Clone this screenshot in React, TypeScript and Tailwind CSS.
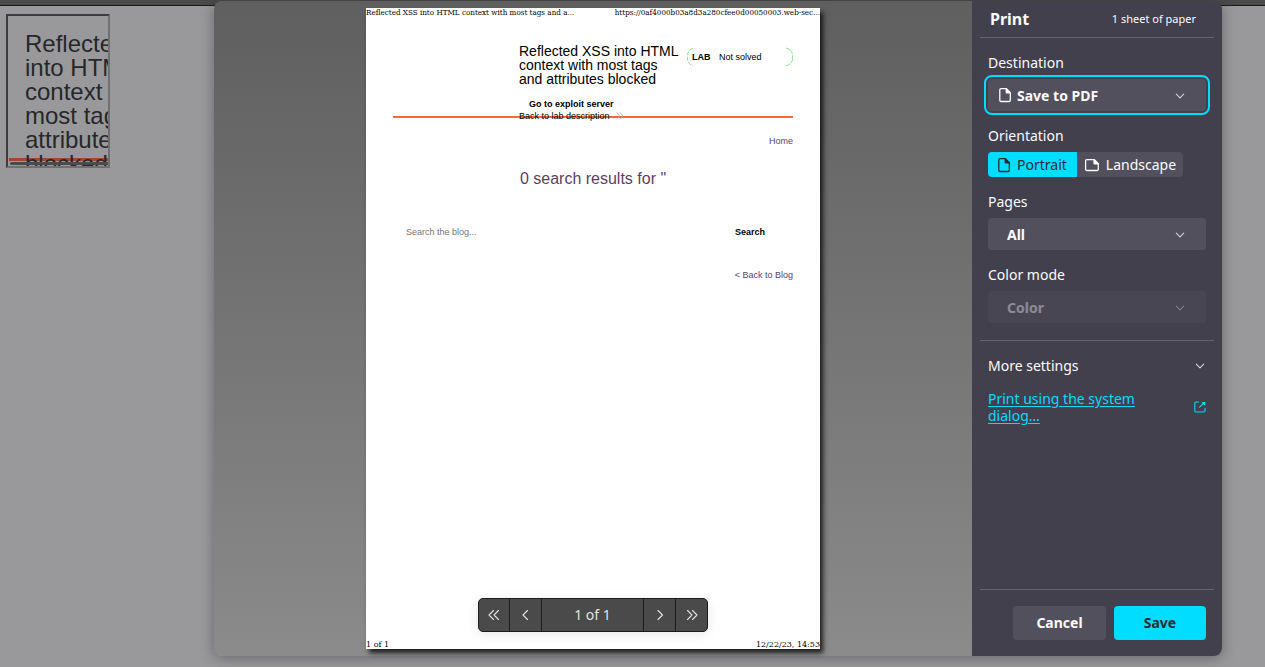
import type { ReactNode } from 'react';

const sans = "font-['Noto_Sans',sans-serif]";
const arial = "font-['Liberation_Sans',Arial,sans-serif]";

function PageIcon({ className = '' }: { className?: string }) {
  return (
    <svg width="14" height="16" viewBox="0 0 14 16" fill="none" className={className} aria-hidden="true">
      <path
        d="M3 1.7h5.3L12.3 5.7v7.6a1.2 1.2 0 0 1-1.2 1.2H3a1.2 1.2 0 0 1-1.2-1.2V2.9A1.2 1.2 0 0 1 3 1.7Z"
        stroke="currentColor"
        strokeWidth="1.3"
      />
      <path d="M7.6 1.2h1L12.9 5.5v1H8.8a1.2 1.2 0 0 1-1.2-1.2Z" fill="currentColor" />
    </svg>
  );
}

function LandscapeIcon() {
  return (
    <svg width="16" height="14" viewBox="0 0 16 14" fill="none" aria-hidden="true">
      <path
        d="M2.8 1.7h7.5l4 4v5.6a1.2 1.2 0 0 1-1.2 1.2H2.8a1.2 1.2 0 0 1-1.2-1.2V2.9a1.2 1.2 0 0 1 1.2-1.2Z"
        stroke="currentColor"
        strokeWidth="1.3"
      />
      <path d="M9.4 1.2h1L14.9 5.5v1h-4.3a1.2 1.2 0 0 1-1.2-1.2Z" fill="currentColor" />
    </svg>
  );
}

function ChevronDown({ className = '' }: { className?: string }) {
  return (
    <svg width="10" height="6" viewBox="0 0 10 6" fill="none" className={className} aria-hidden="true">
      <path d="M1.3 1.2 5 4.8l3.7-3.600" stroke="#d3d3d9" strokeWidth="1.1" strokeLinecap="round" strokeLinejoin="round" />
    </svg>
  );
}

function ExternalIcon() {
  return (
    <svg width="12" height="12" viewBox="0 0 12 12" fill="none" stroke="currentColor" strokeWidth="1.1" strokeLinecap="round" aria-hidden="true">
      <path d="M4.6 1H2a1.2 1.2 0 0 0-1.2 1.2v7.6A1.2 1.2 0 0 0 2 11h7.8a1.2 1.2 0 0 0 1.2-1.2V7.2" />
      <path d="M5.6 6.2 10.4 1.4" />
      <path d="M7.4.9h3.8v3.8Z" fill="currentColor" stroke="none" />
    </svg>
  );
}

function Arrow({ d }: { d: string }) {
  return (
    <svg width="12" height="12" viewBox="0 0 12 12" fill="none" stroke="currentColor" strokeWidth="1.1" strokeLinecap="round" strokeLinejoin="round" aria-hidden="true">
      <path d={d} />
    </svg>
  );
}

function Field({ id, label, children }: { id: string; label: string; children: ReactNode }) {
  return (
    <div className="flex flex-col gap-[6px]">
      <label htmlFor={id} className="text-sm leading-5">{label}</label>
      <div className="relative">{children}</div>
    </div>
  );
}

const selectBase = 'block h-8 w-full appearance-none rounded bg-[#52505c] pt-0.5 text-sm font-bold';

function FrameColumn() {
  const lines = ['Reflected XSS', 'into HTML', 'context with', 'most tags and', 'attributes', 'blocked'];
  return (
    <div className={`${arial} relative h-[154px] w-[104px] overflow-hidden border-2 border-t-[#3c3c3d] border-l-[#3c3c3d] border-r-[#707072] border-b-[#707072] pt-4 pl-[17px]`}>
      <div className="absolute top-[142px] left-px h-[3px] w-full bg-[#a14730]" />
      <h2 className="relative text-2xl leading-6 whitespace-nowrap text-[#27272a]">
        {lines.map((line) => (
          <span key={line} className="block">{line}</span>
        ))}
      </h2>
      <div className="absolute top-[146px] left-[2px] h-[3px] w-full rounded-l bg-[#4b4b4d]" />
    </div>
  );
}

function Paper() {
  return (
    <div className={`${arial} flex w-[454px] flex-col bg-white text-[9px] leading-3 text-black shadow-[3px_4px_5px_rgba(0,0,0,0.8)]`}>
      <div className="flex justify-between font-['DejaVu_Serif_Condensed','DejaVu_Serif',serif] text-[8px] leading-[9px] whitespace-nowrap">
        <span>Reflected XSS into HTML context with most tags and a...</span>
        <span>https://0af4000b03a8d3a280cfee0d00050003.web-sec...</span>
      </div>
      <div className="flex-1 px-[27px]">
        <header className="flex h-[101px] justify-end border-b-2 border-[#ff6633] pt-[27px]">
          <div className="w-[168px] shrink-0">
            <h2 className="text-sm leading-[14px] whitespace-nowrap">
              Reflected XSS into HTML
              <br />
              context with most tags
              <br />
              and attributes blocked
            </h2>
            <a href="#exploit" className="mt-3 ml-[10px] block font-bold">Go to exploit server</a>
            <a href="#lab" className="flex items-center gap-[6px] whitespace-nowrap">
              Back to lab description
              <svg width="8" height="8" viewBox="0 0 8 8" fill="none" stroke="#a8a8a8" strokeWidth="0.8" aria-hidden="true">
                <path d="M1 .5 3.5 4 1 7.5M4.3.5 6.8 4 4.3 7.5" />
              </svg>
            </a>
          </div>
          <div className="relative mt-[3px] flex h-5 w-[106px] items-center pl-[5px]">
            <svg className="absolute inset-0 h-full w-full" viewBox="0 0 106 20" fill="none" stroke="#7fe07f" strokeWidth="0.9" aria-hidden="true">
              <path d="M6 1.2C3 2 .6 4.500 .6 8v4C.6 15.500 3 18 6 18.600" strokeDasharray="4 1.5" />
              <path d="M99 1c4 .8 6.600 4 6.600 7.500v3c0 3.500-2.600 6.500-6.600 7.300" strokeDasharray="9 1" />
            </svg>
            <span className="w-[27px] font-bold">LAB</span>
            <span>Not solved</span>
          </div>
        </header>
        <nav className="mt-[17px] text-right text-[#5c3f66]">
          <a href="#home">Home</a>
        </nav>
        <h1 className="mt-[22px] text-center text-base leading-5 text-[#5c3f66]">0 search results for &quot;</h1>
        <form className="mt-[37px] flex justify-between pr-7 pl-[13px]" onSubmit={(e) => e.preventDefault()}>
          <input aria-label="Search the blog" placeholder="Search the blog..." className="w-[200px] placeholder:text-[#757575]" />
          <button className="font-bold">Search</button>
        </form>
        <div className="mt-[31px] text-right text-[#5c3f66]">
          <a href="#blog">&lt; Back to Blog</a>
        </div>
      </div>
      <div className="flex justify-between font-['DejaVu_Serif',serif] text-[8px] leading-[9px] whitespace-nowrap">
        <span>1 of 1</span>
        <span>12/22/23, 14:53</span>
      </div>
    </div>
  );
}

function Pager() {
  return (
    <div className="absolute bottom-6 left-1/2 flex h-[34px] -translate-x-1/2 divide-x divide-[#1c1c1c] rounded-[5px] border border-[#1c1c1c] bg-[#4a4a4a] text-[#e3e3e3] shadow-[0_2px_12px_rgba(0,0,0,0.1)]">
      <button aria-label="First page" className="flex w-[31px] items-center justify-center"><Arrow d="M5.5 1.5 1 6l4.5 4.5M10.5 1.5 6 6l4.5 4.5" /></button>
      <button aria-label="Previous page" className="flex w-8 items-center justify-center"><Arrow d="M7.5 1.5 3 6 7.5 10.5" /></button>
      <span className="flex w-[102px] items-center justify-center text-sm">1 of 1</span>
      <button aria-label="Next page" className="flex w-8 items-center justify-center"><Arrow d="M4 1.5 8.5 6 4 10.5" /></button>
      <button aria-label="Last page" className="flex w-[31px] items-center justify-center"><Arrow d="M1.5 1.5 6 6l-4.5 4.5M6.5 1.5 11 6l-4.5 4.5" /></button>
    </div>
  );
}

function Sidebar() {
  return (
    <aside className="flex w-[250px] shrink-0 flex-col rounded-r-lg bg-[#42404c] text-[#fbfbfe]">
      <header className="mx-2 flex h-[37px] items-center justify-between border-b border-[#65636f] pr-[18px] pl-[10px]">
        <h1 className="text-base font-bold">Print</h1>
        <p className="text-[11px]">1 sheet of paper</p>
      </header>
      <div className="mx-2 flex flex-col gap-[15px] border-b border-[#65636f] px-2 pt-[15px] pb-[17px]">
        <Field id="destination" label="Destination">
          <select id="destination" className={`${selectBase} pl-[29px] outline-2 outline-offset-2 outline-[#00ddff]`}>
            <option>Save to PDF</option>
          </select>
          <PageIcon className="pointer-events-none absolute top-2 left-[10px]" />
          <ChevronDown className="pointer-events-none absolute top-[14px] right-[21px]" />
        </Field>
        <fieldset>
          <legend className="mb-[6px] text-sm leading-5">Orientation</legend>
          <div className="flex">
            <label className="flex h-[25px] items-center gap-[6px] rounded-l bg-[#00ddff] pr-[10px] pl-[9px] text-sm text-[#2b2a33]">
              <input type="radio" name="orientation" defaultChecked className="sr-only" />
              <PageIcon />
              Portrait
            </label>
            <label className="flex h-[25px] items-center gap-[6px] rounded-r bg-[#52505c] px-[7px] text-sm">
              <input type="radio" name="orientation" className="sr-only" />
              <LandscapeIcon />
              Landscape
            </label>
          </div>
        </fieldset>
        <Field id="pages" label="Pages">
          <select id="pages" className={`${selectBase} pl-[19px]`}>
            <option>All</option>
          </select>
          <ChevronDown className="pointer-events-none absolute top-[14px] right-[21px]" />
        </Field>
        <Field id="color" label="Color mode">
          <select id="color" disabled className={`${selectBase} pl-[19px] opacity-40`}>
            <option>Color</option>
          </select>
          <ChevronDown className="pointer-events-none absolute top-[14px] right-[21px] opacity-40" />
        </Field>
      </div>
      <div className="flex flex-1 flex-col gap-[14px] px-4 pt-[15px]">
        <button className="flex items-center justify-between pr-px text-sm leading-5">
          More settings
          <ChevronDown />
        </button>
        <a href="#system" className="flex items-center justify-between text-sm leading-[17px] text-[#00ddff]">
          <span className="w-[170px] underline underline-offset-2">Print using the system dialog…</span>
          <ExternalIcon />
        </a>
      </div>
      <footer className="mx-2 flex justify-end gap-2 border-t border-[#65636f] px-2 py-4 text-sm font-bold">
        <button className="h-[34px] w-[93px] rounded bg-[#52505c]">Cancel</button>
        <button className="h-[34px] w-[92px] rounded bg-[#00ddff] text-[#2b2a33]">Save</button>
      </footer>
    </aside>
  );
}

export default function App() {
  return (
    <div className={`${sans} flex h-screen flex-col overflow-hidden bg-[#99999b]`}>
      <div className="h-[6px] shrink-0 border-b border-[#19191b] bg-[#4a4a4a]" />
      <div className="flex min-h-0 flex-1">
        <div className="w-[214px] shrink-0 pt-2 pl-[6px]">
          <FrameColumn />
        </div>
        <main role="dialog" aria-label="Print" className="-mt-[5px] mr-[43px] mb-[11px] flex flex-1 rounded-lg shadow-[0_2px_14px_rgba(30,30,40,0.4)]">
          <section className="relative flex flex-1 justify-center rounded-l-lg bg-linear-to-b from-[#5f5f5f] to-[#8b8b8b] pt-[7px] pb-[7px]">
            <Paper />
            <Pager />
          </section>
          <Sidebar />
        </main>
      </div>
    </div>
  );
}
